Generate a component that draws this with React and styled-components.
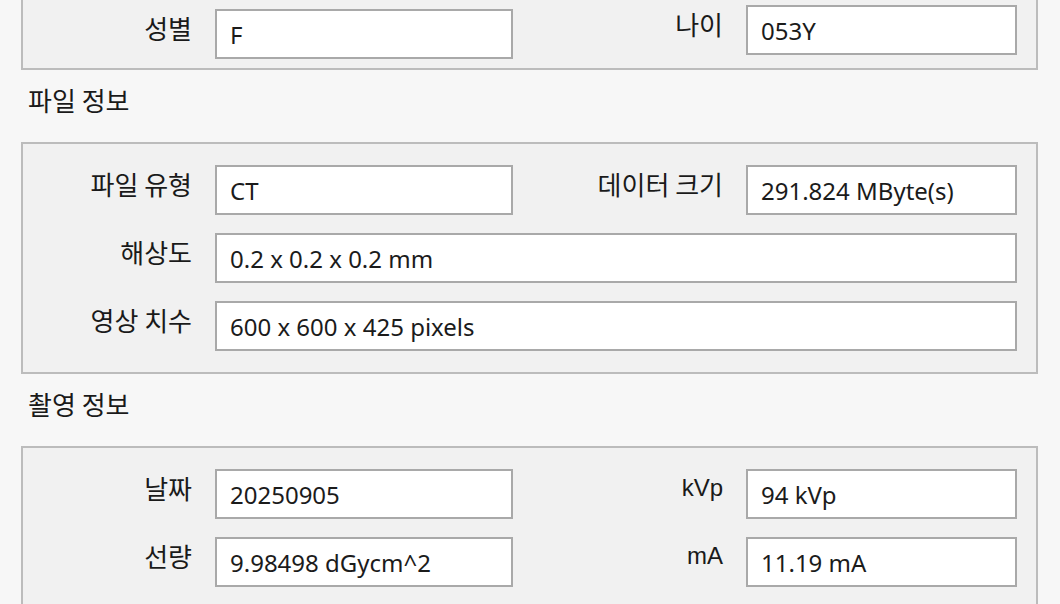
import styled, { createGlobalStyle } from 'styled-components';

const GlobalStyle = createGlobalStyle`
  html, body {
    margin: 0;
    padding: 0;
    background: #f7f7f7;
    overflow: hidden;
  }
`;

const Page = styled.div`
  width: 1060px;
  height: 604px;
  overflow: hidden;
  padding: 0 22px 0 21px;
  box-sizing: border-box;
  font-family: 'Noto Sans CJK KR', sans-serif;
  color: #1a1a1a;
`;

const Title = styled.div`
  margin: 15px 0 27px 7px;
  height: 30px;
  line-height: 30px;
  font-size: 26px;
  font-family: 'Noto Sans CJK KR', sans-serif;
`;

const GroupBox = styled.div`
  background: #f1f1f1;
  border: 2px solid #bcbcbc;
  border-top: ${(p) => (p.$clipped ? 'none' : '2px solid #bcbcbc')};
  padding: ${(p) => (p.$clipped ? '9px 0 9px 0' : '21px 0 21px 0')};
  display: grid;
  grid-template-columns: 192px 298px 233px 271px;
  row-gap: 18px;
`;

const Label = styled.div`
  align-self: start;
  margin-top: 4px;
  padding-right: 23px;
  text-align: right;
  font-size: ${(p) => (p.$latin ? '24px' : '26px')};
  line-height: 30px;
  white-space: nowrap;
  font-family: ${(p) => (p.$latin ? "'Liberation Sans', sans-serif" : "'Noto Sans CJK KR', sans-serif")};
  ${(p) => p.$lift && 'transform: translateY(-4px);'}
`;

const Field = styled.div`
  grid-column: ${(p) => (p.$wide ? 'span 3' : 'auto')};
  height: 50px;
  box-sizing: border-box;
  background: #fff;
  border: 2px solid #a9a9a9;
  padding-left: 13px;
  display: flex;
  align-items: center;
  font-family: 'Noto Sans', 'Noto Sans CJK KR', sans-serif;
  font-size: 24px;
  color: #1b1b1b;
  white-space: nowrap;
  ${(p) => p.$lift && 'margin-top: -4px; margin-bottom: 4px;'}
`;

const Row = ({ items }) =>
  items.map((it) => [
    <Label key={it.label} $latin={it.latin} $lift={it.lift}>
      {it.label}
    </Label>,
    <Field key={it.label + '-v'} $wide={it.wide} $lift={it.lift}>
      {it.value}
    </Field>,
  ]);

const sections = [
  {
    title: null,
    rows: [
      [
        { label: '성별', value: 'F' },
        { label: '나이', value: '053Y', lift: true },
      ],
    ],
  },
  {
    title: '파일 정보',
    rows: [
      [
        { label: '파일 유형', value: 'CT' },
        { label: '데이터 크기', value: '291.824 MByte(s)' },
      ],
      [{ label: '해상도', value: '0.2 x 0.2 x 0.2 mm', wide: true }],
      [{ label: '영상 치수', value: '600 x 600 x 425 pixels', wide: true }],
    ],
  },
  {
    title: '촬영 정보',
    rows: [
      [
        { label: '날짜', value: '20250905' },
        { label: 'kVp', value: '94 kVp', latin: true },
      ],
      [
        { label: '선량', value: '9.98498 dGycm^2' },
        { label: 'mA', value: '11.19 mA', latin: true },
      ],
    ],
  },
];

export default function App() {
  return (
    <>
      <GlobalStyle />
      <Page>
        {sections.map((s, i) => (
          <div key={i}>
            {s.title && <Title>{s.title}</Title>}
            <GroupBox $clipped={!s.title}>
              {s.rows.map((r, j) => (
                <Row key={j} items={r} />
              ))}
            </GroupBox>
          </div>
        ))}
      </Page>
    </>
  );
}
